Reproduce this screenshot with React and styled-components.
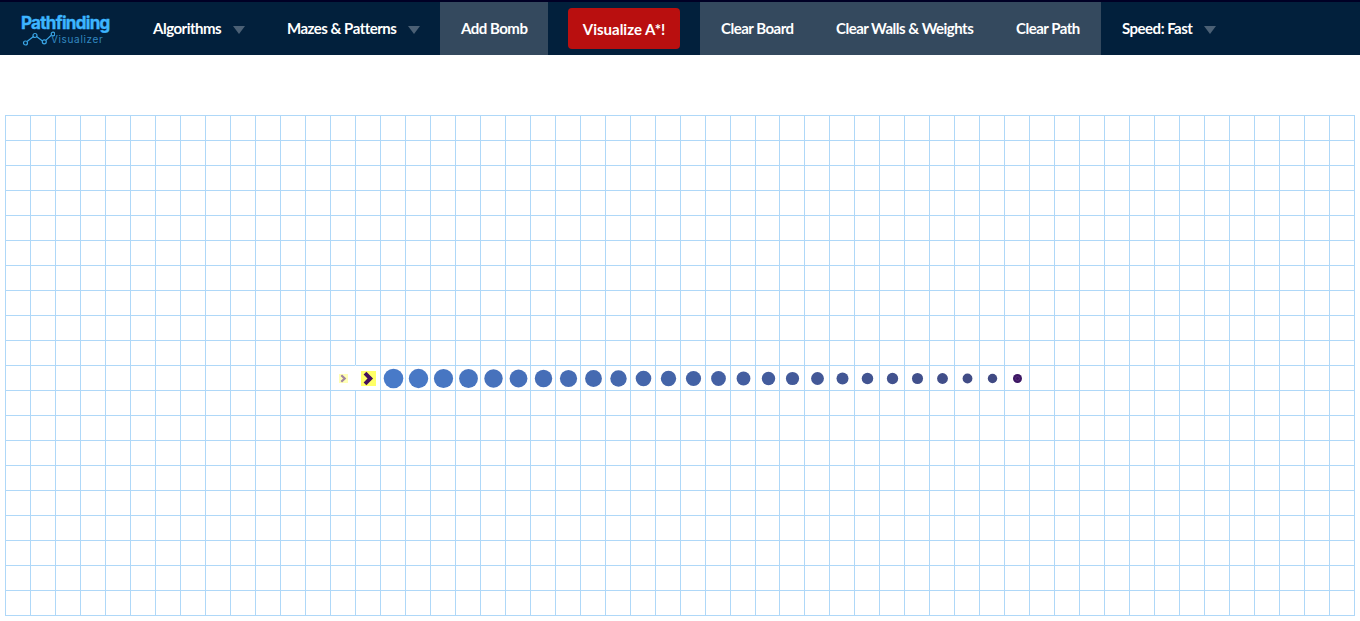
import React from 'react';
import styled, { createGlobalStyle } from 'styled-components';

const Global = createGlobalStyle`
  * { box-sizing: border-box; }
  body { margin: 0; background: #fff; overflow: hidden; font-family: Lato, sans-serif; }
`;

const Nav = styled.nav`
  display: flex;
  height: 55px;
  background: #02203c;
  border-top: 2px solid #000025;
`;

const Brand = styled.a`
  width: 132px;
  padding: 12px 0 0 21px;
`;

const BrandName = styled.div`
  font: 700 17px/19px Inter, sans-serif;
  letter-spacing: -0.7px;
  color: #3db5ff;
  -webkit-text-stroke: 0.4px #3db5ff;
  white-space: nowrap;
`;

const BrandSub = styled.div`
  display: flex;
  margin: -2px 0 0;
  font: 400 10px/16px Inter, sans-serif;
  letter-spacing: 0.65px;
  color: #3288c0;
`;

const Graph = styled.svg`
  flex: none;
  margin-right: -4px;
`;

const NavItem = styled.button`
  display: flex;
  align-items: center;
  width: ${(p) => p.$width}px;
  height: 53px;
  padding: 0 0 2px 21px;
  border: 0;
  background: ${(p) => (p.$active ? '#34495e' : 'transparent')};
  color: #fff;
  font: 700 15px/20px Lato, sans-serif;
  letter-spacing: -0.5px;
  white-space: nowrap;
`;

const Caret = styled.span`
  margin: 4px 0 0 12px;
  border: 6px solid transparent;
  border-top: 8px solid #4b6075;
  border-bottom: 0;
`;

const ActionSlot = styled.div`
  width: 152px;
  padding: 6px 20px;
`;

const Action = styled.button`
  width: 112px;
  height: 41px;
  padding: 1px 0 0;
  border: 0;
  border-radius: 4px;
  background: #b90f0f;
  color: #fff;
  font: 700 15px/20px Lato, sans-serif;
  white-space: nowrap;
`;

const Board = styled.main`
  display: grid;
  grid-template-columns: repeat(30, 25px) 24px repeat(23, 25px);
  grid-auto-rows: 25px;
  width: 1350px;
  margin: 60px 0 0 5px;
  border: solid #afd8f8;
  border-width: 0 1px 1px 0;
`;

const Cell = styled.div`
  padding: 1px 0 0 1px;
  border-top: 1px solid #afd8f8;
  border-left: 1px solid ${(p) => (p.$joined ? 'transparent' : '#afd8f8')};
`;

const Marker = styled.svg`
  display: block;
`;

const SIZES = [
  19.6, 19.4, 19.2, 18.8, 18.4, 17.8, 17.4, 17.2, 16.8, 16.4, 15.6, 15.4, 15.2, 14.8,
  13.8, 13.4, 13.2, 12.8, 12, 11.5, 11.3, 11.1, 10.8, 9.8, 9.4, 9,
];

const mix = (t) => {
  const from = [72, 122, 200];
  const to = [64, 72, 128];
  return `rgb(${from.map((c, i) => Math.round(c + (to[i] - c) * t)).join(',')})`;
};

function Arrow({ small }) {
  return (
    <Marker width="23" height="23" viewBox="0 0 23 23">
      {small ? (
        <>
          <rect x="7" y="7" width="9" height="9" fill="#ffffb5" />
          <path d="M9.3 8.3 12.7 11.5 9.3 14.7" fill="none" stroke="#a184a0" strokeWidth="2.2" />
        </>
      ) : (
        <>
          <rect x="4" y="4" width="15" height="15" fill="#ffff66" />
          <path d="M8 6.2 13.3 11.5 8 16.8" fill="none" stroke="#430f5c" strokeWidth="3.9" />
        </>
      )}
    </Marker>
  );
}

function Dot({ index }) {
  const last = index === SIZES.length - 1;
  return (
    <Marker width="23" height="23" viewBox="0 0 23 23">
      <circle cx="11.5" cy="11.5" r={SIZES[index] / 2} fill={last ? '#3d1763' : mix(index / 25)} />
      {last && <circle cx="11.5" cy="11.5" r="2" fill="none" stroke="#5a2f7e" strokeWidth="0.8" />}
    </Marker>
  );
}

function content(row, col) {
  if (row !== 10) return null;
  if (col === 13) return <Arrow small />;
  if (col === 14) return <Arrow />;
  if (col >= 15 && col < 15 + SIZES.length) return <Dot index={col - 15} />;
  return null;
}

export default function App() {
  return (
    <>
      <Global />
      <Nav>
        <Brand>
          <BrandName>Pathfinding</BrandName>
          <BrandSub>
            <Graph width="34" height="15" viewBox="0 0 34 15" fill="none" stroke="#3aa5e6" strokeWidth="1.2">
              <path d="M6 10.5 12.5 5.5M15.5 5.5 21.5 10M24.8 9.4 30.8 3.8" />
              <circle cx="4.5" cy="12" r="2" />
              <circle cx="14" cy="4.5" r="2" />
              <circle cx="23.3" cy="10.8" r="2" />
              <circle cx="32" cy="3" r="1.8" />
            </Graph>
            Visualizer
          </BrandSub>
        </Brand>
        <NavItem $width={134}>Algorithms<Caret /></NavItem>
        <NavItem $width={174}>Mazes &amp; Patterns<Caret /></NavItem>
        <NavItem $width={108} $active>Add Bomb</NavItem>
        <ActionSlot><Action>Visualize A*!</Action></ActionSlot>
        <NavItem $width={115} $active>Clear Board</NavItem>
        <NavItem $width={180} $active>Clear Walls &amp; Weights</NavItem>
        <NavItem $width={106} $active>Clear Path</NavItem>
        <NavItem $width={140}>Speed: Fast<Caret /></NavItem>
      </Nav>
      <Board>
        {Array.from({ length: 20 * 54 }, (_, i) => {
          const row = Math.floor(i / 54);
          const col = i % 54;
          return (
            <Cell key={i} $joined={row === 10 && col === 14}>
              {content(row, col)}
            </Cell>
          );
        })}
      </Board>
    </>
  );
}
